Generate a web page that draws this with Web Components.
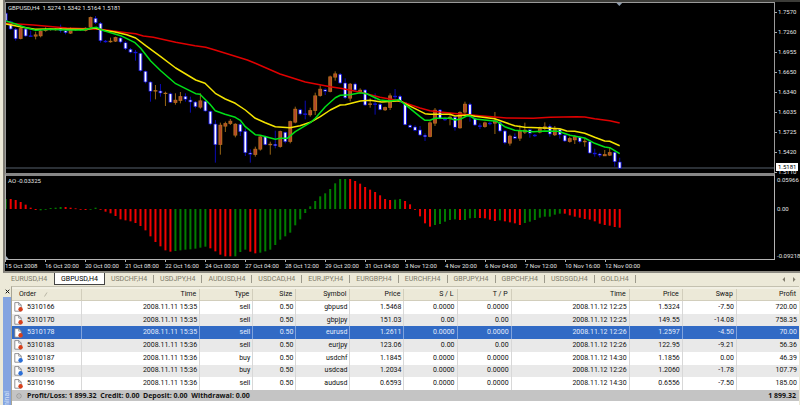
<!DOCTYPE html>
<html lang="en">
<head>
<meta charset="utf-8">
<title>GBPUSD,H4</title>
<style>
html, body { height: 100%; }
body { margin: 0; overflow: hidden; background: #ece9d8; font: 7px/12px Roboto, "Open Sans", sans-serif; color: #111; }
</style>
</head>
<body>
<trading-app></trading-app>
<script>
const SVG = 'http://www.w3.org/2000/svg';
const define = (name, html, ready) => customElements.define(name, class extends HTMLElement {
  constructor() {
    super();
    this.attachShadow({ mode: 'open' }).innerHTML = html;
    if (ready) ready(this.shadowRoot);
  }
});
const shape = (parent, tag, attrs) => {
  const el = document.createElementNS(SVG, tag);
  for (const k in attrs) el.setAttribute(k, attrs[k]);
  parent.append(el);
  return el;
};
const barX = i => 5.7 + 4.992 * i;

/* candles: direction (d = down, u = up), body top, body bottom, high, low; thirds of a unit */
const CANDLES = `d40 62 35 64,d65 87 62 90,d88 116 84 122,u85 116 82 118,d87 108 84 110,d107 110 92 110,u104 109 95 118,u93 108 90 112,u88 92 82 95,u86 89 84 92,u87 90 85 92,d84 92 74 98,d92 98 88 103,u87 100 82 102,u88 90 86 92,u87 90 86 92,u84 92 82 94,u52 82 50 84,d55 68 48 72,d70 122 66 128,d123 126 120 128,u123 126 113 128,u112 124 110 126,d114 126 112 130,d128 146 124 150,d148 157 144 160,d156 159 150 182,d160 212 158 215,d214 246 212 250,d246 274 244 305,u271 274 255 298,d273 279 252 290,u279 281 275 318,d281 307 278 309,u300 308 280 314,u289 302 276 310,d289 298 280 305,d300 306 290 338,d306 320 303 325,u302 322 280 326,d304 333 302 335,d334 372 332 376,d372 434 360 488,u375 434 368 464,u370 379 365 396,u363 371 357 375,u372 406 370 412,d373 395 368 408,d394 458 385 468,d459 463 448 488,u447 464 440 470,u410 448 405 452,d410 434 407 436,u432 435 425 464,d433 437 392 445,u394 440 392 443,d397 425 395 430,u364 425 362 430,u327 367 320 370,d329 342 326 346,d341 344 302 358,u331 345 323 350,u287 332 278 345,u267 287 256 290,d269 274 265 285,u230 275 227 277,u221 232 214 242,d223 249 219 252,d249 293 235 297,u252 295 249 304,d252 270 248 274,u270 276 265 280,d270 315 267 318,u311 314 295 323,d311 314 280 344,d313 329 310 331,u322 330 320 333,u287 323 280 330,d288 291 267 300,d289 305 284 310,d308 374 306 376,d376 382 373 384,d381 391 376 394,d390 405 378 408,d406 410 400 423,u368 410 364 412,u330 370 324 378,d330 355 327 358,d357 360 350 363,u351 354 345 376,d352 382 348 392,u337 384 334 386,u312 337 305 345,d313 345 308 365,d355 375 348 378,d377 380 370 387,u368 380 365 383,d369 372 365 376,u362 370 336 402,d367 393 364 397,d393 428 390 433,u408 430 404 437,d410 415 400 418,u393 415 376 423,u390 397 368 402,d389 400 386 413,d405 408 402 411,u386 397 380 400,u380 386 367 390,d379 402 373 410,u388 405 378 408,d388 404 384 416,d406 423 403 426,u415 425 410 428,u410 420 405 432,d412 425 408 430,u423 426 415 440,d425 459 422 461,d459 462 446 470,d462 466 458 472,u463 468 450 468,u457 466 443 468,d457 485 454 500,d486 505 473 508`.split(',');

/* moving averages: x,y in plot units */
const join = (...parts) => parts.map(([ox, oy, s]) =>
  s.split(' ').map(p => { const [x, y] = p.split(','); return `${(ox + x / 3).toFixed(1)},${(oy + y / 3).toFixed(1)}`; }).join(' ')).join(' ');
const AVERAGES = {
  '#e00000': join([0, 0, '17,70 100,75 200,84 260,86 300,88 380,98 407,101 430,108 460,112 527,127 585,137 617,142 645,150'],
    [200, 60, '142,0 166,10 240,42 316,66 391,80 430,86 481,97 540,112 590,121'],
    [400, 60, '0,124 60,144 90,152 120,156 180,162 284,171 320,174 400,175 450,172 530,170 554,171 584,176 629,182 659,189']),
  '#f4e400': join([0, 0, '17,72 60,80 105,88 150,87 260,88 285,84 305,90 345,96 380,104 407,114 437,137 482,170 527,204 587,240'],
    [200, 60, '15,70 46,100 76,117 106,130 136,150 166,175 196,188 226,200 270,203 300,197 331,187 361,170 391,150 421,135 436,134 481,123 511,121 545,126 590,123'],
    [400, 60, '0,122 15,131 45,146 75,161 90,163 150,163 165,168 205,165 225,169 284,176 314,187 344,197 374,202 434,204 479,206 500,213 524,214 554,220 584,232 614,243 629,244 659,257']),
  '#00e018': join([0, 0, '17,63 47,72 77,83 107,91 150,88 200,90 250,90 275,84 290,82 305,90 362,107 405,128 422,145 452,183 482,212 527,251 587,281'],
    [200, 60, '0,103 30,133 46,152 75,163 106,172 121,181 136,200 166,224 181,226 226,238 241,235 262,235 286,215 331,188 346,175 376,140 406,113 421,106 450,104 480,98 500,101 540,120 570,123 597,119'],
    [400, 60, '0,122 15,133 60,170 75,181 90,181 105,175 150,175 165,180 180,178 200,168 210,168 225,177 290,184 314,200 344,211 400,215 434,213 475,214 510,226 554,234 584,250 614,261 629,263 659,281'])
};

/* oscillator: colour (g / r) and height in thirds of a unit */
const BARS = 'g30 r30 r27 r21 r13 r4 r-3 g-4 g-2 g3 g4 g6 r6 r4 r2 r-2 r-3 g-2 g4 r-2 r-8 r-13 r-21 r-31 r-34 r-37 r-42 r-51 r-64 r-82 r-99 r-112 r-124 r-128 g-126 g-124 g-122 g-121 g-119 g-116 g-113 r-118 r-127 r-137 r-142 r-142 g-142 g-129 g-122 r-128 r-133 g-131 g-127 g-122 g-108 g-92 g-82 g-71 g-49 g-31 g-12 g8 g24 g38 g47 g60 g77 g90 g90 r90 r84 r76 r66 r58 r51 r41 r30 r27 g28 g30 r24 r14 r-2 r-22 r-43 r-53 g-48 g-45 g-38 g-33 g-31 r-33 g-33 g-28 g-27 r-27 r-28 r-32 r-36 g-34 r-37 r-40 r-43 r-48 g-42 g-38 g-33 g-26 g-23 g-23 g-17 g-14 r-14 r-19 r-23 r-26 r-30 r-32 r-37 r-44 r-48 r-50 r-54 r-56'.split(' ');

define('price-chart', `
<style>
:host { display: grid; grid-template-columns: minmax(0, 1fr) 25px; height: 171px; position: relative; }
.plot { border: 1px solid #9a9a9a; border-bottom: 0; box-sizing: border-box; overflow: hidden; }
svg { display: block; width: 100%; height: 100%; }
.title { position: absolute; left: 3px; top: 2px; line-height: 8px; white-space: pre; }
.axis { position: relative; height: 171px; }
.axis span, .axis b { display: block; padding-left: 3px; position: relative; line-height: 20px; }
.axis span::before { content: ""; position: absolute; left: 0; top: 10px; width: 2px; height: 1px; background: #aaa; }
.axis b { position: absolute; top: 161px; left: 1px; right: 2px; padding-left: 2px; font-weight: 400; line-height: 8px; background: #fff; color: #000; z-index: 1; }
</style>
<div class="plot"><svg viewBox="6 3 768 170" preserveAspectRatio="none" aria-hidden="true"></svg></div>
<div class="axis"><span>1.7570</span><span>1.7260</span><span>1.6955</span><span>1.6650</span><span>1.6340</span><span>1.6035</span><span>1.5725</span><span>1.5420</span><span>1.5110</span><b>1.5181</b></div>
<div class="title">GBPUSD,H4  1.5274 1.5342 1.5164 1.5181</div>`, root => {
  const svg = root.querySelector('svg');
  shape(svg, 'path', { d: 'M6 168H774', stroke: '#56616c', 'stroke-width': 1 });
  shape(svg, 'path', { d: 'M616 2.5H622.600L619.300 6Z', fill: '#8c9cae' });
  CANDLES.forEach((c, i) => {
    const down = c[0] === 'd', x = barX(i);
    const [t, b, h, l] = c.slice(1).split(' ').map(v => v / 3);
    shape(svg, 'path', { d: `M${x} ${h}V${l}`, stroke: down ? '#0a0ab4' : '#966414', 'stroke-width': 1 });
    shape(svg, 'rect', { x: x - 1.9, y: t - .2, width: 3.8, height: Math.max(1.2, b - t + .4), fill: down ? '#1414dc' : '#b4701c' });
    if (b - t > 1.3) shape(svg, 'rect', { x: x - .9, y: t + .4, width: 1.8, height: b - t - .8, fill: down ? '#fff' : '#b4442c' });
  });
  for (const colour in AVERAGES)
    shape(svg, 'polyline', { points: AVERAGES[colour], fill: 'none', stroke: colour, 'stroke-width': 1.5, 'stroke-linejoin': 'round' });
});

define('oscillator-chart', `
<style>
:host { display: grid; grid-template-columns: minmax(0, 1fr) 25px; height: 87px; position: relative; }
.plot { border: 1px solid #b4b4b4; border-top: 3px solid #868686; box-sizing: border-box; overflow: hidden; }
svg { display: block; width: 100%; height: 100%; }
.title { position: absolute; left: 3px; top: 4px; line-height: 8px; }
.axis { display: flex; flex-direction: column; justify-content: space-between; line-height: 8px; padding-top: 3px; box-sizing: border-box; }
.axis span { padding-left: 2px; }
.axis span:nth-child(2) { margin-bottom: 18px; }
</style>
<div class="plot"><svg viewBox="6 176 768 83" preserveAspectRatio="none" aria-hidden="true"></svg></div>
<div class="axis"><span>0.05966</span><span>0.00</span><span>-0.09218</span></div>
<div class="title">AO -0.03325</div>`, root => {
  const svg = root.querySelector('svg');
  shape(svg, 'path', { d: 'M6 256V260H9.500Z', fill: '#aab6c2' });
  BARS.forEach((b, i) => {
    const v = b.slice(1) / 3;
    shape(svg, 'rect', { x: barX(i) - 1, y: v > 0 ? 209 - v : 209, width: 2, height: Math.max(.8, Math.abs(v)), fill: b[0] === 'g' ? '#007c00' : '#f00000' });
  });
});

define('time-axis', `
<style>
:host { display: grid; grid-template-columns: repeat(16, minmax(0, 40fr)) 130fr; margin-right: 25px; height: 11px; line-height: 12px; }
span { white-space: nowrap; position: relative; }
span::before { content: ""; position: absolute; left: 0; top: 0; width: 1px; height: 2px; background: #b4b4b4; }
</style>`, root => {
  for (const t of ['15 Oct 2008', '16 Oct 20:00', '20 Oct 00:00', '21 Oct 08:00', '22 Oct 16:00', '24 Oct 00:00', '27 Oct 04:00', '28 Oct 12:00', '29 Oct 20:00', '31 Oct 04:00', '3 Nov 12:00', '4 Nov 20:00', '6 Nov 04:00', '7 Nov 12:00', '10 Nov 16:00', '12 Nov 00:00']) {
    const s = document.createElement('span');
    s.textContent = t;
    root.append(s);
  }
});

define('chart-window', `
<style>
:host { display: block; margin-left: 3px; padding-top: 2px; border-left: 2px solid #807e76; border-bottom: 2px solid #8c8a82; background: linear-gradient(#3c3c38 2px, #000 2px); color: #e4e4e4; font-size: 6px; }
</style>
<slot></slot>`);

define('symbol-tab', `
<style>
:host { display: block; border-right: 1px solid #9c9a8c; margin: 2px 0; height: 8px; }
button { all: unset; display: block; padding: 0 6px; line-height: 8px; color: #7c7968; white-space: nowrap; cursor: default; }
:host([active]) { margin: 0; height: 11px; border: 1px solid #444; border-top: 0; background: #fff; }
:host([active]) button { line-height: 12px; color: #000; }
:host([plain]) { border-right-color: transparent; }
</style>
<button type="button"><slot></slot></button>`);

define('symbol-tabs', `
<style>
:host { display: flex; align-items: flex-start; height: 13px; margin-left: 3px; padding-left: 1px; background: #ece9d8; }
::slotted(:first-child) { margin-left: 1px; }
.scroll { margin-left: auto; display: flex; gap: 6px; padding-right: 4px; }
.scroll button { all: unset; line-height: 12px; display: flex; align-items: center; height: 12px; }
svg { width: 4px; height: 5px; fill: #807c6c; }
</style>
<slot></slot>
<div class="scroll">
<button type="button" aria-label="Scroll left"><svg viewBox="0 0 4 5"><path d="M3 0V5L.5 2.500Z"/></svg></button>
<button type="button" aria-label="Scroll right"><svg viewBox="0 0 4 5"><path d="M1 0V5L3.500 2.500Z"/></svg></button>
</div>`);

define('order-icon', `
<style>
:host { display: block; width: 9px; height: 10px; }
svg { display: block; width: 9px; height: 10px; }
</style>
<svg viewBox="0 0 9 10" aria-hidden="true"><path d="M.8.6H4.800L7.200 3V9.200H.8Z" fill="#fff" stroke="#77777c" stroke-width=".8"/><path d="M4.700.6V3.100H7.200" fill="none" stroke="#77777c" stroke-width=".7"/><circle cx="6.600" cy="7.300" r="2.200"/></svg>`);

define('orders-table', `
<style>
:host { display: block; background: #fff; }
table { width: 100%; height: 112px; table-layout: fixed; border-collapse: separate; border-spacing: 0; }
th, td { padding: 0 2px 0 0; font-weight: 400; text-align: right; line-height: 11px; white-space: nowrap; overflow: hidden; border-right: 1px solid #d8d8d8; }
thead tr { height: 12px; background: #ece9d8; }
th { padding-right: 3px; border-right-color: #d2cebc; border-bottom: 1px solid #d2cebc; }
th:first-child { text-align: left; padding-left: 7px; }
th button { all: unset; display: inline-flex; align-items: center; gap: 8px; }
th svg { width: 4px; height: 5px; }
tbody tr:nth-child(even) { background: #e9e9e9; }
tbody tr.selected { background: #316ac5; color: #e4ecfa; }
tbody tr.selected td { border-right-color: #7fa2dc; }
td:first-child div { display: flex; align-items: center; gap: 4px; padding-left: 2px; }
td:last-child, th:last-child { border-right: 0; }
tfoot tr { background: #c4c4c4; }
tfoot td { border: 0; font: 700 7px/11px "Open Sans", sans-serif; color: #111; padding-right: 3px; }
tfoot td:first-child div { white-space: pre; gap: 5px; padding-left: 4px; }
tfoot svg { width: 6px; height: 6px; }
</style>
<table>
<colgroup></colgroup>
<thead><tr></tr></thead>
<tbody></tbody>
<tfoot><tr><td colspan="11"><div><svg viewBox="0 0 6 6" aria-hidden="true"><circle cx="3" cy="3" r="2.200" fill="#d4d4d4" stroke="#8c8c8c" stroke-width=".8"/><path d="M2 3H4" stroke="#8c8c8c" stroke-width=".7"/></svg><span>Profit/Loss: 1 899.32  Credit: 0.00  Deposit: 0.00  Withdrawal: 0.00</span></div></td><td>1 899.32</td></tr></tfoot>
</table>`, root => {
  const widths = [70, 118, 53, 43, 54, 54, 53, 54, 118, 53, 54, 62];
  root.querySelector('colgroup').innerHTML = widths.map(w => `<col style="width:${w}px">`).join('');
  root.querySelector('thead tr').innerHTML = ['<button type="button">Order <svg viewBox="0 0 4 5" aria-hidden="true"><path d="M.5 4.500L3 .5" stroke="#aca899" stroke-width=".8"/></svg></button>', 'Time', 'Type', 'Size', 'Symbol', 'Price', 'S / L', 'T / P', 'Time', 'Price', 'Swap', 'Profit'].map(h => `<th scope="col">${h}</th>`).join('');
  const rows = [
    ['5310166', '15:35', 'sell', 'gbpusd', '1.5468', '0.0000', '12:25', '1.5324', '-7.50', '720.00'],
    ['5310170', '15:35', 'sell', 'gbpjpy', '151.03', '0.00', '12:25', '149.55', '-14.08', '758.35'],
    ['5310178', '15:35', 'sell', 'eurusd', '1.2611', '0.0000', '12:26', '1.2597', '-4.50', '70.00'],
    ['5310183', '15:36', 'sell', 'eurjpy', '123.06', '0.00', '12:26', '122.95', '-9.21', '56.36'],
    ['5310187', '15:36', 'buy', 'usdchf', '1.1845', '0.0000', '14:30', '1.1856', '0.00', '46.39'],
    ['5310195', '15:36', 'buy', 'usdcad', '1.2034', '0.0000', '12:26', '1.2060', '-1.78', '107.79'],
    ['5310196', '15:36', 'sell', 'audusd', '0.6593', '0.0000', '14:30', '0.6556', '-7.50', '185.00']];
  root.querySelector('tbody').innerHTML = rows.map(([id, open, type, sym, price, stop, close, last, swap, profit], i) =>
    `<tr${i === 2 ? ' class="selected"' : ''}><td><div><order-icon style="fill:${type === 'buy' ? '#2b6fd8' : '#d8401c'}"></order-icon><span>${id}</span></div></td>` +
    ['2008.11.11 ' + open, type, '0.50', sym, price, stop, stop, '2008.11.12 ' + close, last, swap, profit].map(v => `<td>${v}</td>`).join('') + '</tr>').join('');
});

define('terminal-panel', `
<style>
:host { display: grid; grid-template-columns: 8px minmax(0, 1fr); flex: 1; min-height: 0; margin-left: 3px; overflow: hidden; }
.side { display: flex; flex-direction: column; min-height: 0; overflow: hidden; }
.side button { all: unset; display: flex; align-items: center; justify-content: center; height: 11px; flex: none; }
.side svg { width: 5px; height: 5px; stroke: #111; }
.strip { flex: 1; min-height: 0; overflow: hidden; background: #84a4e0; color: #d4e0f8; }
.strip span { display: block; margin-top: 94px; writing-mode: vertical-rl; transform: rotate(180deg); line-height: 8px; }
.body { border-top: 1px solid #c4c1b0; border-left: 1px solid #a8a594; margin-right: 1px; padding-top: 2px; background: linear-gradient(#f2f0e4 2px, #fff 2px); }
</style>
<div class="side"><button type="button" aria-label="Close"><svg viewBox="0 0 5 5"><path d="M.7.7L4.300 4.300M4.300.7L.7 4.300"/></svg></button><div class="strip"><span>Terminal</span></div></div>
<div class="body"><slot></slot></div>`);

define('trading-app', `
<style>
:host { display: flex; flex-direction: column; height: 100%; }
</style>
<chart-window><price-chart></price-chart><oscillator-chart></oscillator-chart><time-axis></time-axis></chart-window>
<symbol-tabs>
<symbol-tab plain>EURUSD,H4</symbol-tab><symbol-tab active>GBPUSD,H4</symbol-tab><symbol-tab>USDCHF,H4</symbol-tab><symbol-tab>USDJPY,H4</symbol-tab><symbol-tab>AUDUSD,H4</symbol-tab><symbol-tab>USDCAD,H4</symbol-tab><symbol-tab>EURJPY,H4</symbol-tab><symbol-tab>EURGBP,H4</symbol-tab><symbol-tab>EURCHF,H4</symbol-tab><symbol-tab>GBPJPY,H4</symbol-tab><symbol-tab>GBPCHF,H4</symbol-tab><symbol-tab>USDSGD,H4</symbol-tab><symbol-tab>GOLD,H4</symbol-tab>
</symbol-tabs>
<terminal-panel><orders-table></orders-table></terminal-panel>`);
</script>
</body>
</html>
